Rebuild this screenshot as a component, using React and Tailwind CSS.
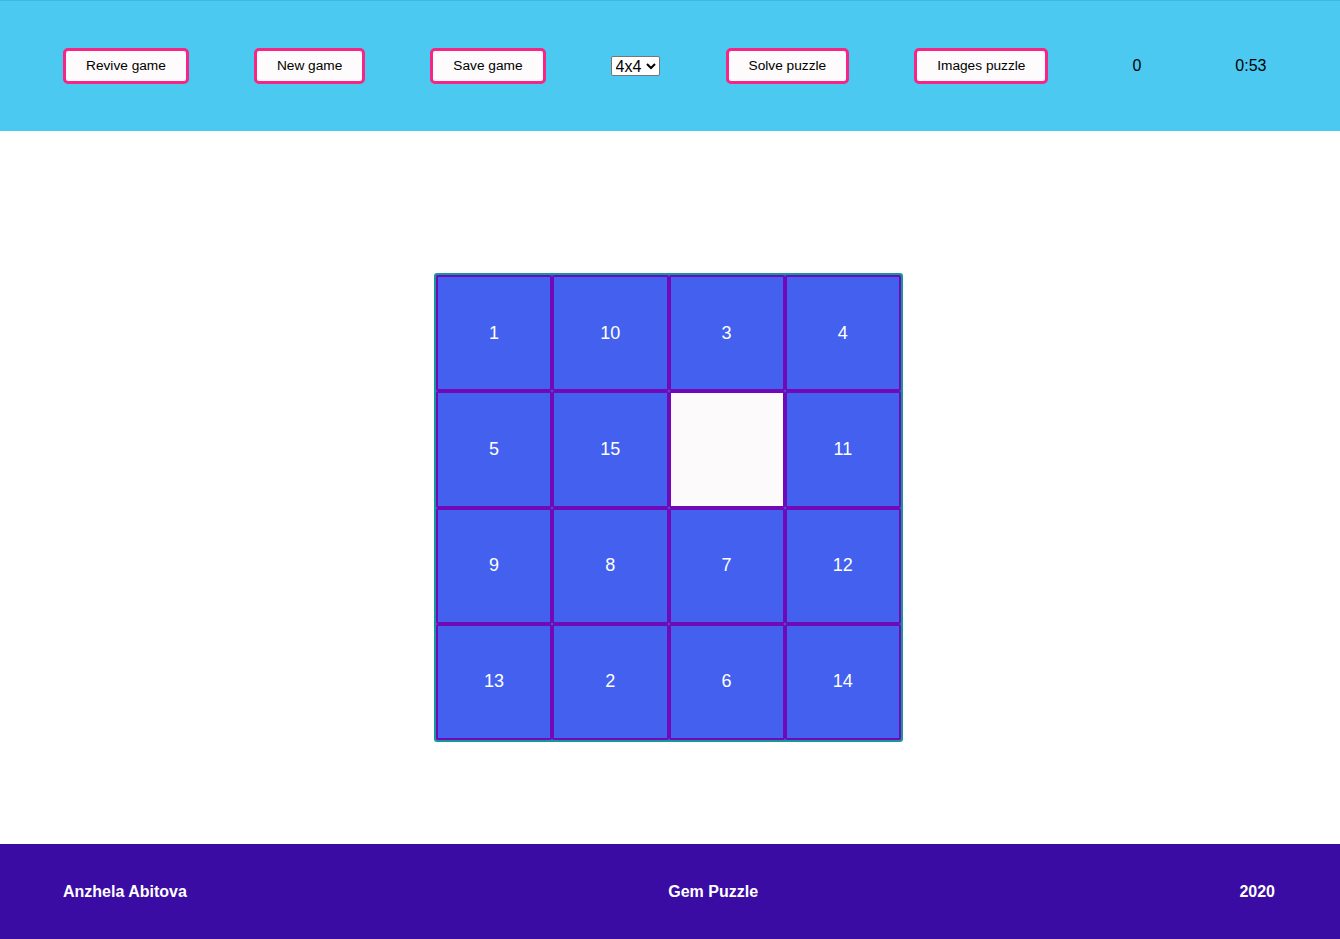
import { useState } from "react";

const tiles = [1, 10, 3, 4, 5, 15, 0, 11, 9, 8, 7, 12, 13, 2, 6, 14];

function HeaderButton({ children, className = "" }) {
  return (
    <button
      className={`h-[36px] px-[20px] border-[3px] border-[#f72585] rounded-[5px] bg-[#fdfbfb] text-[13.7px] text-black leading-none ${className}`}
    >
      {children}
    </button>
  );
}

export default function App() {
  const [size, setSize] = useState("4x4");

  return (
    <div className="min-h-screen flex flex-col font-['Liberation_Sans',Arial,sans-serif]">
      {/* Header */}
      <header className="h-[131px] bg-[#4cc9f0] border-t border-[#3fb6de] flex items-center pl-[63px]">
        <HeaderButton>Revive game</HeaderButton>
        <HeaderButton className="ml-[65px]">New game</HeaderButton>
        <HeaderButton className="ml-[65px]">Save game</HeaderButton>
        <select
          value={size}
          onChange={(e) => setSize(e.target.value)}
          className="ml-[65px] w-[49px] h-[20px] text-[16px] leading-none bg-white border border-[#767676] rounded-[2px] text-black"
        >
          <option>3x3</option>
          <option>4x4</option>
          <option>5x5</option>
          <option>6x6</option>
          <option>7x7</option>
          <option>8x8</option>
        </select>
        <HeaderButton className="ml-[66px]">Solve puzzle</HeaderButton>
        <HeaderButton className="ml-[65px]">Images puzzle</HeaderButton>
        <span className="ml-[84px] text-[16px] text-black">0</span>
        <span className="ml-[94px] text-[16px] text-black">0:53</span>
      </header>

      {/* Board */}
      <main className="flex justify-center pt-[142px] pb-[102px] pr-[3px] bg-white">
        <div className="w-[469px] h-[469px] border-2 border-[#13999b] rounded-[3px] bg-[#4361ee] grid grid-cols-4 grid-rows-4">
          {tiles.map((n) =>
            n === 0 ? (
              <div key={n} className="border-2 border-[#7209b7] rounded-[2px] bg-[#fcfafa]" />
            ) : (
              <div
                key={n}
                className="border-2 border-[#7209b7] rounded-[2px] bg-[#4361ee] flex items-center justify-center text-white text-[18px]"
              >
                {n}
              </div>
            )
          )}
        </div>
      </main>

      {/* Footer */}
      <footer className="h-[95px] bg-[#3a0ca3] flex items-center justify-between pl-[63px] pr-[65px] text-white text-[16px] font-bold">
        <span>Anzhela Abitova</span>
        <span>Gem Puzzle</span>
        <span>2020</span>
      </footer>
    </div>
  );
}
